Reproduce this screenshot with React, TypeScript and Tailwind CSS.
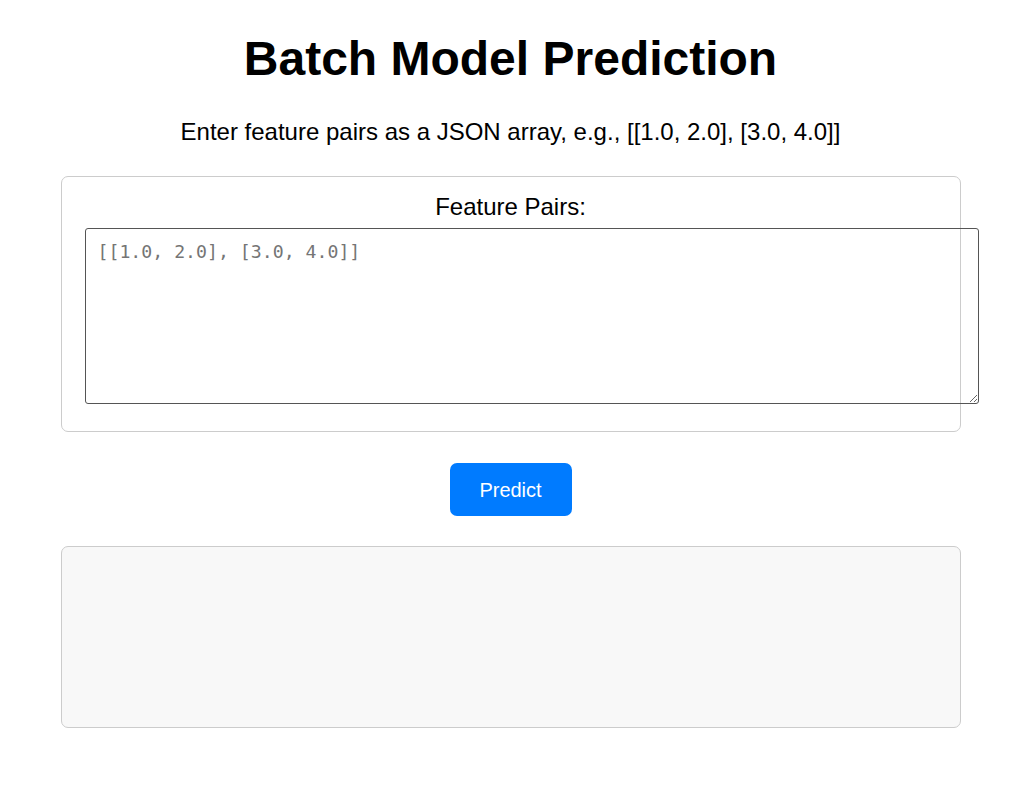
import React, { useState } from 'react';

export default function App() {
    const [features, setFeatures] = useState('');

    return (
        <div className="min-h-screen bg-white text-black font-['Liberation_Sans',Arial,sans-serif]">
            <div className="mx-auto w-[900px] pt-[32px]">
                {/* Title */}
                <h1 className="text-center text-[48px] font-bold leading-[54px]">Batch Model Prediction</h1>
                <p className="mt-[32px] text-center text-[24px] leading-[27px]">
                    Enter feature pairs as a JSON array, e.g., [[1.0, 2.0], [3.0, 4.0]]
                </p>

                {/* Input form */}
                <form
                    className="mt-[31px] h-[256px] rounded-[7px] border border-[#cccccc] px-[23px] pt-[16px]"
                    onSubmit={e => e.preventDefault()}
                >
                    <label htmlFor="features" className="block text-center text-[24px] leading-[27px]">Feature Pairs:</label>
                    <textarea
                        id="features"
                        value={features}
                        onChange={e => setFeatures(e.target.value)}
                        placeholder="[[1.0, 2.0], [3.0, 4.0]]"
                        className="mt-[8px] block h-[176px] w-[894px] rounded-[3px] border border-[#555555] px-[12px] pt-[12px] pb-[8px] font-['DejaVu_Sans_Mono',monospace] text-[18.2px] leading-[22px] placeholder:text-[#757575] outline-none"
                    />
                </form>

                {/* Action */}
                <div className="mt-[31px] flex justify-center">
                    <button className="h-[53px] w-[122px] rounded-[7px] bg-[#007bff] text-[20px] text-white">Predict</button>
                </div>

                {/* Results */}
                <div className="mt-[30px] h-[182px] rounded-[7px] border border-[#cccccc] bg-[#f8f8f8]"></div>
            </div>
        </div>
    );
}
